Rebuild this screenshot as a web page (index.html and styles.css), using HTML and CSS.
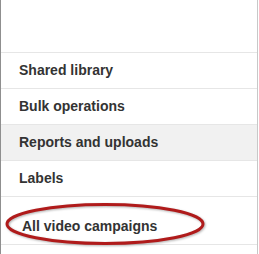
FILE: index.html
```html
<!DOCTYPE html>
<html lang="en">
<head>
  <meta charset="UTF-8">
  <title>Menu</title>
  <link rel="stylesheet" href="styles.css">
</head>
<body>

  <div class="panel">
    <div class="spacer"></div>
    <ul class="menu">
      <li>Shared library</li>
      <li>Bulk operations</li>
      <li class="hover">Reports and uploads</li>
      <li>Labels</li>
      <li class="video">All video campaigns</li>
    </ul>
    <svg class="circle" width="259" height="254" viewBox="0 0 259 254">
      <ellipse cx="105" cy="224" rx="98" ry="19.5" fill="none" stroke="#b01b1b" stroke-width="3" />
    </svg>
  </div>

</body>
</html>
```

FILE: styles.css
```css
body {
  margin: 0;
  background: white;
  font-family: "Liberation Sans", Arial, sans-serif;
}

.panel {
  position: relative;
  width: 256px;
  height: 254px;
  border-left: 1px solid #8f8f8f;
  border-right: 1px solid #c8c8c8;
}

.spacer {
  height: 52px;
}

.menu {
  list-style: none;
  margin: 0;
  padding: 0;
  border-top: 1px solid #e6e6e6;
}

.menu li {
  height: 35px;
  line-height: 35px;
  padding-left: 18px;
  font-size: 14px;
  font-weight: bold;
  color: #333;
  border-bottom: 1px solid #e6e6e6;
}

.menu li.hover {
  background: #f1f1f1;
}

.menu li.video {
  height: 35px;
  padding-top: 12px;
  padding-left: 21px;
}

.circle {
  position: absolute;
  left: -1px;
  top: 0;
  filter: drop-shadow(1px 1px 1px rgba(0,0,0,0.3));
}
```
